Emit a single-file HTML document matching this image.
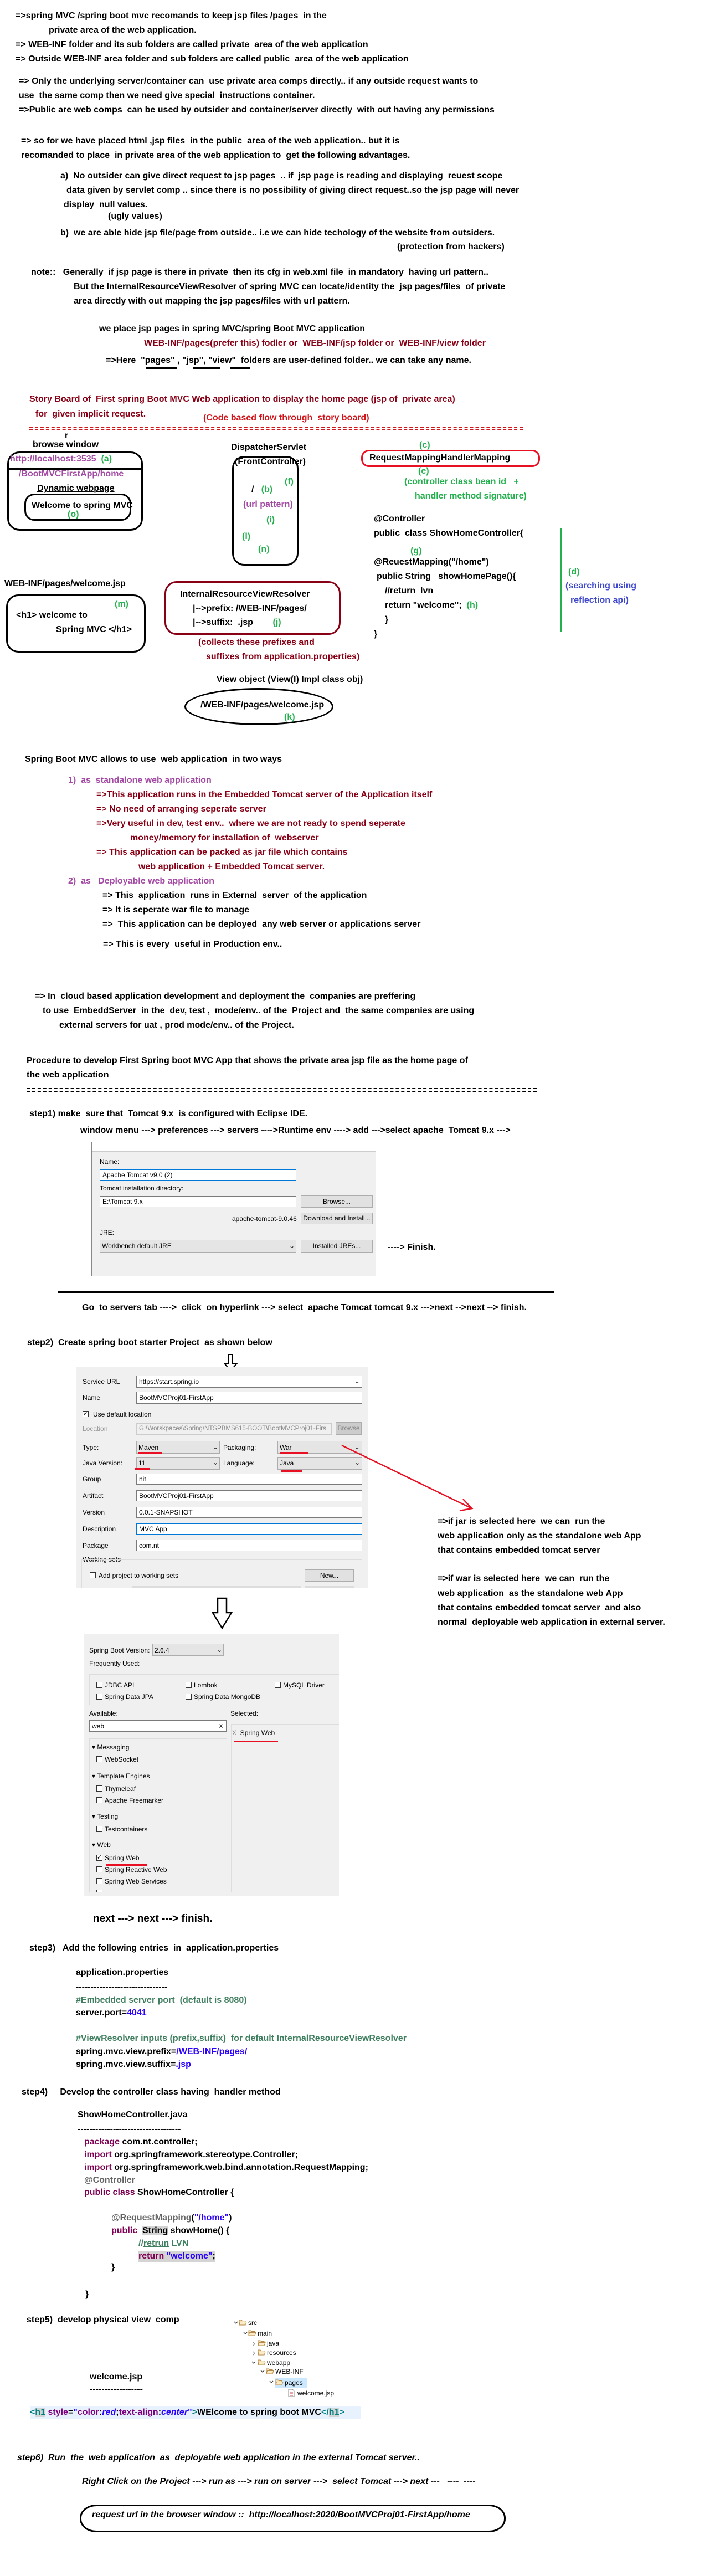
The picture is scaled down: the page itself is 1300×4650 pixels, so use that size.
<!DOCTYPE html>
<html><head><meta charset="utf-8">
<style>
*{margin:0;padding:0;box-sizing:border-box}
body{width:1300px;height:4650px;position:relative;background:#fff;overflow:hidden;font-family:"Liberation Sans",sans-serif;color:#000}
.t{position:absolute;white-space:pre;font:bold 16px/20px "Liberation Sans",sans-serif}
.i{font-style:italic}
.g{color:#22b14c}.p{color:#a349a4}.dr{color:#880015}.r{color:#d0161b}.bl{color:#3f48cc}
.box{position:absolute;border:3px solid #000}
.s{position:absolute;white-space:pre;font:12px/14px "Liberation Sans",sans-serif;color:#000}
.in{position:absolute;background:#fff;border:1px solid #7a7a7a}
.btn{position:absolute;background:#e1e1e1;border:1px solid #adadad;font:12px "Liberation Sans",sans-serif;text-align:center}
.sel{position:absolute;background:#e5e5e5;border:1px solid #adadad}
.cb{position:absolute;width:11px;height:11px;border:1px solid #333;background:#fff}
.ru{position:absolute;height:3px;background:#e81123}
</style></head><body>

<div class="t" style="left:28px;top:19px">=&gt;spring MVC /spring boot mvc recomands to keep jsp files /pages  in the</div>
<div class="t" style="left:88px;top:45px">private area of the web application.</div>
<div class="t" style="left:28px;top:71px">=&gt; WEB-INF folder and its sub folders are called private  area of the web application</div>
<div class="t" style="left:28px;top:97px">=&gt; Outside WEB-INF area folder and sub folders are called public  area of the web application</div>
<div class="t" style="left:34px;top:137px">=&gt; Only the underlying server/container can  use private area comps directly.. if any outside request wants to</div>
<div class="t" style="left:34px;top:163px">use  the same comp then we need give special  instructions container.</div>
<div class="t" style="left:34px;top:189px">=&gt;Public are web comps  can be used by outsider and container/server directly  with out having any permissions</div>
<div class="t" style="left:38px;top:245px">=&gt; so for we have placed html ,jsp files  in the public  area of the web application.. but it is</div>
<div class="t" style="left:38px;top:271px">recomanded to place  in private area of the web application to  get the following advantages.</div>
<div class="t" style="left:109px;top:308px">a)  No outsider can give direct request to jsp pages  .. if  jsp page is reading and displaying  reuest scope</div>
<div class="t" style="left:120px;top:334px">data given by servlet comp .. since there is no possibility of giving direct request..so the jsp page will never</div>
<div class="t" style="left:115px;top:360px">display  null values.</div>
<div class="t" style="left:195px;top:381px">(ugly values)</div>
<div class="t" style="left:109px;top:411px">b)  we are able hide jsp file/page from outside.. i.e we can hide techology of the website from outsiders.</div>
<div class="t" style="left:717px;top:436px">(protection from hackers)</div>
<div class="t" style="left:56px;top:482px">note::   Generally  if jsp page is there in private  then its cfg in web.xml file  in mandatory  having url pattern..</div>
<div class="t" style="left:133px;top:508px">But the InternalResourceViewResolver of spring MVC can locate/identity the  jsp pages/files  of private</div>
<div class="t" style="left:133px;top:534px">area directly with out mapping the jsp pages/files with url pattern.</div>
<div class="t" style="left:179px;top:584px">we place jsp pages in spring MVC/spring Boot MVC application</div>
<div class="t dr" style="left:260px;top:610px">WEB-INF/pages(prefer this) fodler or  WEB-INF/jsp folder or  WEB-INF/view folder</div>
<div class="t" style="left:191px;top:641px">=&gt;Here  "pages" , "jsp", "view"  folders are user-defined folder.. we can take any name.</div>
<div style="position:absolute;left:264px;top:663px;width:55px;height:3px;background:#000"></div>
<div style="position:absolute;left:349px;top:663px;width:48px;height:3px;background:#000"></div>
<div style="position:absolute;left:415px;top:663px;width:36px;height:3px;background:#000"></div>

<div class="t dr" style="left:53px;top:711px">Story Board of  First spring Boot MVC Web application to display the home page (jsp of  private area)</div>
<div class="t dr" style="left:64px;top:738px">for  given implicit request.</div>
<div class="t r" style="left:367px;top:745px">(Code based flow through  story board)</div>
<div style="position:absolute;left:53px;top:770px;width:891px;height:7px;border-top:2px dashed #d0161b;border-bottom:2px dashed #d0161b"></div>

<div class="t" style="left:117px;top:777px">r</div>
<div class="t" style="left:59px;top:793px">browse window</div>
<div class="box" style="left:13px;top:815px;width:245px;height:143px;border-radius:22px"></div>
<div style="position:absolute;left:13px;top:845px;width:245px;height:3px;background:#000"></div>
<div class="t p" style="left:18px;top:819px">http://localhost:3535  <span class="g">(a)</span></div>
<div class="t p" style="left:34px;top:846px">/BootMVCFirstApp/home</div>
<div class="t" style="left:67px;top:872px;text-decoration:underline">Dynamic webpage</div>
<div class="box" style="left:44px;top:891px;width:193px;height:49px;border-radius:18px"></div>
<div class="t" style="left:57px;top:903px">Welcome to spring MVC</div>
<div class="t g" style="left:122px;top:919px">(o)</div>

<div class="t" style="left:417px;top:798px">DispatcherServlet</div>
<div class="box" style="left:419px;top:823px;width:120px;height:198px;border-radius:22px"></div>
<div class="t" style="left:424px;top:824px">(FrontController)</div>
<div class="t g" style="left:514px;top:860px">(f)</div>
<div class="t" style="left:454px;top:874px">/   <span class="g">(b)</span></div>
<div class="t p" style="left:439px;top:901px">(url pattern)</div>
<div class="t g" style="left:481px;top:929px">(i)</div>
<div class="t g" style="left:437px;top:959px">(l)</div>
<div class="t g" style="left:466px;top:982px">(n)</div>

<div class="t g" style="left:757px;top:794px">(c)</div>
<div style="position:absolute;left:652px;top:812px;width:323px;height:31px;border:3px solid #e81123;border-radius:14px"></div>
<div class="t" style="left:667px;top:817px">RequestMappingHandlerMapping</div>
<div class="t g" style="left:755px;top:841px">(e)</div>
<div class="t g" style="left:730px;top:860px">(controller class bean id   +</div>
<div class="t g" style="left:749px;top:886px">handler method signature)</div>
<div class="t" style="left:675px;top:927px">@Controller</div>
<div class="t" style="left:675px;top:953px">public  class ShowHomeController{</div>
<div class="t g" style="left:741px;top:985px">(g)</div>
<div class="t" style="left:675px;top:1005px">@ReuestMapping("/home")</div>
<div class="t" style="left:680px;top:1031px">public String   showHomePage(){</div>
<div class="t" style="left:695px;top:1057px">//return  lvn</div>
<div class="t" style="left:695px;top:1083px">return "welcome";  <span class="g">(h)</span></div>
<div class="t" style="left:695px;top:1109px">}</div>
<div class="t" style="left:675px;top:1135px">}</div>
<div style="position:absolute;left:1012px;top:954px;width:3px;height:187px;background:#22b14c"></div>
<div class="t g" style="left:1026px;top:1023px">(d)</div>
<div class="t bl" style="left:1021px;top:1048px">(searching using</div>
<div class="t bl" style="left:1030px;top:1074px">reflection api)</div>

<div class="t" style="left:8px;top:1044px">WEB-INF/pages/welcome.jsp</div>
<div class="box" style="left:11px;top:1073px;width:252px;height:105px;border-radius:22px"></div>
<div class="t g" style="left:207px;top:1081px">(m)</div>
<div class="t" style="left:29px;top:1101px">&lt;h1&gt; welcome to</div>
<div class="t" style="left:101px;top:1127px">Spring MVC &lt;/h1&gt;</div>

<div style="position:absolute;left:297px;top:1049px;width:318px;height:97px;border:3px solid #880015;border-radius:22px"></div>
<div class="t" style="left:325px;top:1063px">InternalResourceViewResolver</div>
<div class="t" style="left:348px;top:1089px">|--&gt;prefix: /WEB-INF/pages/</div>
<div class="t" style="left:348px;top:1114px">|--&gt;suffix:  .jsp        <span class="g">(j)</span></div>
<div class="t dr" style="left:358px;top:1150px">(collects these prefixes and</div>
<div class="t dr" style="left:372px;top:1176px">suffixes from application.properties)</div>

<div class="t" style="left:391px;top:1217px">View object (View(I) Impl class obj)</div>
<div style="position:absolute;left:333px;top:1242px;width:269px;height:67px;border:3px solid #000;border-radius:50%"></div>
<div class="t" style="left:362px;top:1263px">/WEB-INF/pages/welcome.jsp</div>
<div class="t g" style="left:513px;top:1285px">(k)</div>

<div class="t" style="left:45px;top:1361px">Spring Boot MVC allows to use  web application  in two ways</div>
<div class="t p" style="left:123px;top:1399px">1)  as  standalone web application</div>
<div class="t dr" style="left:174px;top:1425px">=&gt;This application runs in the Embedded Tomcat server of the Application itself</div>
<div class="t dr" style="left:174px;top:1451px">=&gt; No need of arranging seperate server</div>
<div class="t dr" style="left:174px;top:1477px">=&gt;Very useful in dev, test env..  where we are not ready to spend seperate</div>
<div class="t dr" style="left:235px;top:1503px">money/memory for installation of  webserver</div>
<div class="t dr" style="left:174px;top:1529px">=&gt; This application can be packed as jar file which contains</div>
<div class="t dr" style="left:250px;top:1555px">web application + Embedded Tomcat server.</div>
<div class="t p" style="left:123px;top:1581px">2)  as   Deployable web application</div>
<div class="t" style="left:185px;top:1607px">=&gt; This  application  runs in External  server  of the application</div>
<div class="t" style="left:185px;top:1633px">=&gt; It is seperate war file to manage</div>
<div class="t" style="left:185px;top:1659px">=&gt;  This application can be deployed  any web server or applications server</div>
<div class="t" style="left:186px;top:1695px">=&gt; This is every  useful in Production env..</div>

<div class="t" style="left:63px;top:1789px">=&gt; In  cloud based application development and deployment the  companies are preffering</div>
<div class="t" style="left:77px;top:1815px">to use  EmbeddServer  in the  dev, test ,  mode/env.. of the  Project and  the same companies are using</div>
<div class="t" style="left:107px;top:1841px">external servers for uat , prod mode/env.. of the Project.</div>

<div class="t" style="left:48px;top:1905px">Procedure to develop First Spring boot MVC App that shows the private area jsp file as the home page of</div>
<div class="t" style="left:48px;top:1931px">the web application</div>
<div style="position:absolute;left:48px;top:1964px;width:921px;height:7px;border-top:2px dashed #000;border-bottom:2px dashed #000"></div>

<div class="t" style="left:53px;top:2001px">step1) make  sure that  Tomcat 9.x  is configured with Eclipse IDE.</div>
<div class="t" style="left:145px;top:2031px">window menu ---&gt; preferences ---&gt; servers ----&gt;Runtime env ----&gt; add ---&gt;select apache  Tomcat 9.x ---&gt;</div>

<div style="position:absolute;left:164px;top:2061px;width:514px;height:242px;background:#f0f0f0;border-left:2px solid #888"></div>
<div style="position:absolute;left:166px;top:2061px;width:512px;height:18px;background:#fff;border-bottom:1px solid #ccc"></div>
<div class="s" style="left:180px;top:2090px">Name:</div>
<div class="in" style="left:180px;top:2111px;width:355px;height:20px;border-color:#0078d7"></div>
<div class="s" style="left:185px;top:2114px">Apache Tomcat v9.0 (2)</div>
<div class="s" style="left:180px;top:2138px">Tomcat installation directory:</div>
<div class="in" style="left:180px;top:2159px;width:355px;height:20px"></div>
<div class="s" style="left:185px;top:2162px">E:\Tomcat 9.x</div>
<div class="btn" style="left:543px;top:2158px;width:130px;height:22px;line-height:20px">Browse...</div>
<div class="s" style="left:419px;top:2193px">apache-tomcat-9.0.46</div>
<div class="btn" style="left:543px;top:2189px;width:130px;height:21px;line-height:19px">Download and Install...</div>
<div class="s" style="left:180px;top:2218px">JRE:</div>
<div class="sel" style="left:180px;top:2238px;width:355px;height:23px"></div>
<div class="s" style="left:184px;top:2242px">Workbench default JRE</div>
<div class="s" style="left:522px;top:2242px">⌄</div>
<div class="btn" style="left:543px;top:2238px;width:130px;height:23px;line-height:21px">Installed JREs...</div>
<div class="t" style="left:700px;top:2242px">----&gt; Finish.</div>

<div style="position:absolute;left:105px;top:2331px;width:895px;height:3px;background:#000"></div>
<div class="t" style="left:148px;top:2351px">Go  to servers tab ----&gt;  click  on hyperlink ---&gt; select  apache Tomcat tomcat 9.x ---&gt;next --&gt;next --&gt; finish.</div>

<div class="t" style="left:49px;top:2414px">step2)  Create spring boot starter Project  as shown below</div>
<svg style="position:absolute;left:403px;top:2444px" width="30" height="32"><path d="M9 1 H17 V17 H25 L13 30 L2 17 H9 Z" fill="#fff" stroke="#000" stroke-width="2"/></svg>

<div style="position:absolute;left:137px;top:2468px;width:527px;height:399px;background:#f0f0f0"></div>
<div class="s" style="left:149px;top:2487px">Service URL</div>
<div class="in" style="left:246px;top:2483px;width:408px;height:22px"></div>
<div class="s" style="left:251px;top:2487px">https://start.spring.io</div>
<div class="s" style="left:640px;top:2486px">⌄</div>
<div class="s" style="left:149px;top:2516px">Name</div>
<div class="in" style="left:246px;top:2512px;width:408px;height:22px"></div>
<div class="s" style="left:251px;top:2516px">BootMVCProj01-FirstApp</div>
<div class="cb" style="left:149px;top:2547px"></div><div class="s" style="left:150px;top:2545px;font-size:11px">✓</div>
<div class="s" style="left:168px;top:2546px">Use default location</div>
<div class="s" style="left:149px;top:2572px;color:#999">Location</div>
<div class="in" style="left:246px;top:2569px;width:353px;height:21px;background:#f0f0f0;border-color:#ccc"></div>
<div class="s" style="left:251px;top:2572px;color:#888;font-size:11.5px">G:\Worskpaces\Spring\NTSPBMS615-BOOT\BootMVCProj01-Firs</div>
<div class="btn" style="left:606px;top:2567px;width:47px;height:23px;line-height:21px;color:#888;background:#ccc">Browse</div>
<div class="s" style="left:149px;top:2606px">Type:</div>
<div class="sel" style="left:246px;top:2601px;width:151px;height:23px"></div><div class="s" style="left:250px;top:2606px">Maven</div><div class="s" style="left:384px;top:2605px">⌄</div>
<div class="s" style="left:403px;top:2606px">Packaging:</div>
<div class="sel" style="left:501px;top:2601px;width:153px;height:23px"></div><div class="s" style="left:505px;top:2606px">War</div><div class="s" style="left:640px;top:2605px">⌄</div>
<div class="s" style="left:149px;top:2634px">Java Version:</div>
<div class="sel" style="left:246px;top:2630px;width:151px;height:23px"></div><div class="s" style="left:250px;top:2634px">11</div><div class="s" style="left:384px;top:2633px">⌄</div>
<div class="s" style="left:403px;top:2634px">Language:</div>
<div class="sel" style="left:501px;top:2630px;width:153px;height:23px"></div><div class="s" style="left:505px;top:2634px">Java</div><div class="s" style="left:640px;top:2633px">⌄</div>
<div class="ru" style="left:250px;top:2621px;width:43px"></div>
<div class="ru" style="left:505px;top:2621px;width:52px"></div>
<div class="ru" style="left:244px;top:2650px;width:27px"></div>
<div class="ru" style="left:508px;top:2654px;width:38px"></div>
<div class="s" style="left:149px;top:2663px">Group</div>
<div class="in" style="left:246px;top:2660px;width:408px;height:20px"></div><div class="s" style="left:251px;top:2663px">nit</div>
<div class="s" style="left:149px;top:2693px">Artifact</div>
<div class="in" style="left:246px;top:2690px;width:408px;height:20px"></div><div class="s" style="left:251px;top:2693px">BootMVCProj01-FirstApp</div>
<div class="s" style="left:149px;top:2723px">Version</div>
<div class="in" style="left:246px;top:2720px;width:408px;height:20px"></div><div class="s" style="left:251px;top:2723px">0.0.1-SNAPSHOT</div>
<div class="s" style="left:149px;top:2753px">Description</div>
<div class="in" style="left:246px;top:2750px;width:408px;height:20px;border-color:#0078d7"></div><div class="s" style="left:251px;top:2753px">MVC App</div>
<div class="s" style="left:149px;top:2783px">Package</div>
<div class="in" style="left:246px;top:2779px;width:408px;height:21px"></div><div class="s" style="left:251px;top:2783px">com.nt</div>
<div class="s" style="left:149px;top:2808px">Working sets</div>
<div style="position:absolute;left:147px;top:2815px;width:507px;height:52px;border:1px solid #ddd;border-bottom:none"></div>
<div class="cb" style="left:162px;top:2838px"></div>
<div class="s" style="left:178px;top:2837px">Add project to working sets</div>
<div class="btn" style="left:550px;top:2833px;width:89px;height:22px;line-height:20px">New...</div>
<div style="position:absolute;left:239px;top:2863px;width:304px;height:4px;background:#ddd"></div>
<div style="position:absolute;left:550px;top:2863px;width:89px;height:4px;background:#ddd"></div>

<svg style="position:absolute;left:600px;top:2600px" width="270" height="140"><path d="M17 9 L252 123" stroke="#e81123" stroke-width="2.5" fill="none"/><path d="M236 106 L252 123 L230 127" stroke="#e81123" stroke-width="2.5" fill="none"/></svg>

<div class="t" style="left:790px;top:2737px">=&gt;if jar is selected here  we can  run the</div>
<div class="t" style="left:790px;top:2763px">web application only as the standalone web App</div>
<div class="t" style="left:790px;top:2789px">that contains embedded tomcat server</div>
<div class="t" style="left:790px;top:2840px">=&gt;if war is selected here  we can  run the</div>
<div class="t" style="left:790px;top:2867px">web application  as the standalone web App</div>
<div class="t" style="left:790px;top:2893px">that contains embedded tomcat server  and also</div>
<div class="t" style="left:790px;top:2919px">normal  deployable web application in external server.</div>

<svg style="position:absolute;left:381px;top:2883px" width="40" height="60"><path d="M12 2 H28 V28 H37 L20 56 L3 28 H12 Z" fill="#fff" stroke="#000" stroke-width="2.5"/></svg>

<div style="position:absolute;left:151px;top:2950px;width:461px;height:473px;background:#f0f0f0"></div>
<div class="s" style="left:161px;top:2972px">Spring Boot Version:</div>
<div class="sel" style="left:275px;top:2967px;width:129px;height:22px"></div><div class="s" style="left:279px;top:2972px">2.6.4</div><div class="s" style="left:391px;top:2971px">⌄</div>
<div class="s" style="left:161px;top:2996px">Frequently Used:</div>
<div style="position:absolute;left:161px;top:3022px;width:451px;height:56px;border:1px solid #ddd;border-right:none"></div>
<div class="cb" style="left:174px;top:3036px"></div><div class="s" style="left:189px;top:3035px">JDBC API</div>
<div class="cb" style="left:335px;top:3036px"></div><div class="s" style="left:350px;top:3035px">Lombok</div>
<div class="cb" style="left:496px;top:3036px"></div><div class="s" style="left:511px;top:3035px">MySQL Driver</div>
<div class="cb" style="left:174px;top:3057px"></div><div class="s" style="left:189px;top:3056px">Spring Data JPA</div>
<div class="cb" style="left:335px;top:3057px"></div><div class="s" style="left:350px;top:3056px">Spring Data MongoDB</div>
<div class="s" style="left:161px;top:3086px">Available:</div>
<div class="s" style="left:416px;top:3086px">Selected:</div>
<div class="in" style="left:161px;top:3105px;width:248px;height:21px"></div><div class="s" style="left:166px;top:3109px">web</div><div class="s" style="left:396px;top:3108px">x</div>
<div style="position:absolute;left:417px;top:3112px;width:195px;height:304px;border-left:1px solid #ddd;border-top:1px solid #ddd"></div>
<div class="s" style="left:419px;top:3121px"><span style="color:#888">X</span>  Spring Web</div>
<div class="ru" style="left:422px;top:3142px;width:80px"></div>
<div style="position:absolute;left:161px;top:3138px;width:249px;height:278px;border-left:1px solid #ddd;border-top:1px solid #ddd;border-right:1px solid #ddd"></div>
<div class="s" style="left:166px;top:3147px">▾ Messaging</div>
<div class="cb" style="left:174px;top:3170px"></div><div class="s" style="left:189px;top:3169px">WebSocket</div>
<div class="s" style="left:166px;top:3199px">▾ Template Engines</div>
<div class="cb" style="left:174px;top:3223px"></div><div class="s" style="left:189px;top:3222px">Thymeleaf</div>
<div class="cb" style="left:174px;top:3244px"></div><div class="s" style="left:189px;top:3243px">Apache Freemarker</div>
<div class="s" style="left:166px;top:3272px">▾ Testing</div>
<div class="cb" style="left:174px;top:3296px"></div><div class="s" style="left:189px;top:3295px">Testcontainers</div>
<div class="s" style="left:166px;top:3323px">▾ Web</div>
<div class="cb" style="left:174px;top:3348px"></div><div class="s" style="left:175px;top:3346px;font-size:11px">✓</div><div class="s" style="left:189px;top:3347px">Spring Web</div>
<div class="ru" style="left:192px;top:3365px;width:73px"></div>
<div class="cb" style="left:174px;top:3369px"></div><div class="s" style="left:189px;top:3368px">Spring Reactive Web</div>
<div class="cb" style="left:174px;top:3390px"></div><div class="s" style="left:189px;top:3389px">Spring Web Services</div>
<div class="cb" style="left:174px;top:3411px;height:5px;border-bottom:none"></div>

<div class="t" style="left:168px;top:3454px;font-size:19px">next ---&gt; next ---&gt; finish.</div>

<div class="t" style="left:53px;top:3507px">step3)   Add the following entries  in  application.properties</div>
<div class="t" style="left:137px;top:3551px">application.properties</div>
<div class="t" style="left:137px;top:3577px">-------------------------------</div>
<div class="t" style="left:137px;top:3601px;color:#3f7f5f">#Embedded server port  (default is 8080)</div>
<div class="t" style="left:137px;top:3624px">server.port=<span style="color:#2a00ff">4041</span></div>
<div class="t" style="left:137px;top:3670px;color:#3f7f5f">#ViewResolver inputs (prefix,suffix)  for default InternalResourceViewResolver</div>
<div class="t" style="left:137px;top:3694px">spring.mvc.view.prefix=<span style="color:#2a00ff">/WEB-INF/pages/</span></div>
<div class="t" style="left:137px;top:3717px">spring.mvc.view.suffix=<span style="color:#2a00ff">.jsp</span></div>

<div class="t" style="left:39px;top:3767px">step4)     Develop the controller class having  handler method</div>
<div class="t" style="left:140px;top:3808px">ShowHomeController.java</div>
<div class="t" style="left:140px;top:3834px">-----------------------------------</div>
<div class="t" style="left:152px;top:3857px"><span style="color:#7f0055">package</span> com.nt.controller;</div>
<div class="t" style="left:152px;top:3880px"><span style="color:#7f0055">import</span> org.springframework.stereotype.Controller;</div>
<div class="t" style="left:152px;top:3903px"><span style="color:#7f0055">import</span> org.springframework.web.bind.annotation.RequestMapping;</div>
<div class="t" style="left:152px;top:3926px;color:#646464">@Controller</div>
<div class="t" style="left:152px;top:3948px"><span style="color:#7f0055">public class</span> ShowHomeController {</div>
<div class="t" style="left:201px;top:3994px"><span style="color:#646464">@RequestMapping</span>(<span style="color:#2a00ff">"/home"</span>)</div>
<div class="t" style="left:201px;top:4017px"><span style="color:#7f0055">public</span>  <span style="background:#d4d4d4">String</span> showHome() {</div>
<div class="t" style="left:250px;top:4040px;color:#3f7f5f">//<span style="text-decoration:underline">retrun</span> LVN</div>
<div class="t" style="left:250px;top:4063px;background:#d4d4d4"><span style="color:#7f0055">return</span> <span style="color:#2a00ff">"welcome"</span>;</div>
<div class="t" style="left:201px;top:4083px">}</div>
<div class="t" style="left:154px;top:4132px">}</div>

<div class="t" style="left:48px;top:4178px">step5)  develop physical view  comp</div>

<svg style="position:absolute;left:415px;top:4182px" width="220" height="150" font-family="Liberation Sans, sans-serif" font-size="12">
<defs><g id="f"><path d="M0 2 H4 L5.5 3.5 H11 V11 H0 Z" fill="#f5e2b8" stroke="#b5894a" stroke-width="1"/><path d="M1.5 5.5 H13 L11 11 H0 Z" fill="#fbecc8" stroke="#b5894a" stroke-width="1"/></g></defs>
<path d="M8 9 l3 3 l3 -3" stroke="#444" fill="none" stroke-width="1.3"/><use href="#f" x="17" y="4"/><text x="33" y="15">src</text>
<path d="M25 28 l3 3 l3 -3" stroke="#444" fill="none" stroke-width="1.3"/><use href="#f" x="34" y="23"/><text x="50" y="34">main</text>
<path d="M42 46 l3 3 l-3 3" stroke="#999" fill="none" stroke-width="1.3"/><use href="#f" x="51" y="41"/><text x="67" y="52">java</text>
<path d="M42 63 l3 3 l-3 3" stroke="#999" fill="none" stroke-width="1.3"/><use href="#f" x="51" y="58"/><text x="67" y="69">resources</text>
<path d="M40 81 l3 3 l3 -3" stroke="#444" fill="none" stroke-width="1.3"/><use href="#f" x="51" y="76"/><text x="67" y="87">webapp</text>
<path d="M56 97 l3 3 l3 -3" stroke="#444" fill="none" stroke-width="1.3"/><use href="#f" x="66" y="92"/><text x="82" y="103">WEB-INF</text>
<rect x="82" y="110" width="57" height="18" fill="#cce8ff"/>
<path d="M72 116 l3 3 l3 -3" stroke="#444" fill="none" stroke-width="1.3"/><use href="#f" x="83" y="112"/><text x="99" y="123">pages</text>
<path d="M106 131 h7 l3 3 v10 h-10 z" fill="#fff" stroke="#888"/><path d="M108 136 h6 M108 139 h6 M108 142 h6" stroke="#c44" stroke-width="1"/><text x="122" y="142">welcome.jsp</text>
</svg>

<div class="t" style="left:162px;top:4281px">welcome.jsp</div>
<div class="t" style="left:162px;top:4303px">------------------</div>
<div style="position:absolute;left:54px;top:4343px;width:598px;height:23px;background:#e8f2fe"></div>
<div class="t" style="left:54px;top:4345px"><span style="color:#008080">&lt;<span style="background:#d4d4d4">h1</span></span> <span style="color:#7f007f">style</span>=<span style="color:#2a00ff">"</span><span style="color:#7f007f">color</span>:<span style="color:#2a00ff;font-style:italic">red</span>;<span style="color:#7f007f">text-align</span>:<span style="color:#2a00ff;font-style:italic">center</span><span style="color:#2a00ff">"</span><span style="color:#008080">&gt;</span>WElcome to spring boot MVC<span style="color:#008080">&lt;/<span style="background:#d4d4d4">h1</span>&gt;</span></div>

<div class="t i" style="left:31px;top:4427px">step6)  Run  the  web application  as  deployable web application in the external Tomcat server..</div>
<div class="t i" style="left:148px;top:4470px">Right Click on the Project ---&gt; run as ---&gt; run on server ---&gt;  select Tomcat ---&gt; next ---   ----  ----</div>
<div class="box" style="left:144px;top:4521px;width:769px;height:50px;border-radius:30px/24px;border-width:3px"></div>
<div class="t i" style="left:166px;top:4530px">request url in the browser window ::  http://localhost:2020/BootMVCProj01-FirstApp/home</div>

</body></html>
